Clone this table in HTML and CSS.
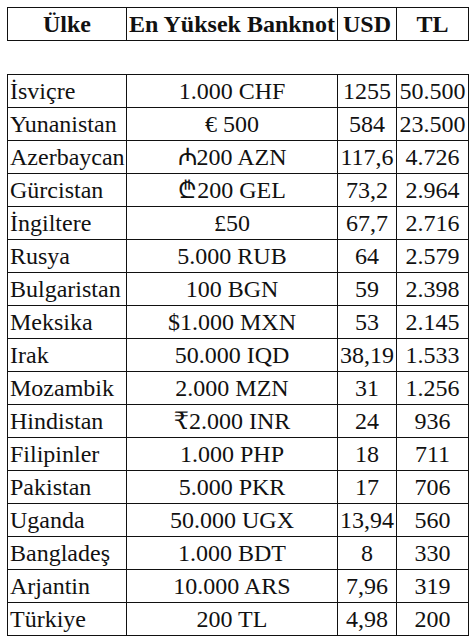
FILE: index.html
```html
<!DOCTYPE html>
<html lang="tr">
<head>
<meta charset="utf-8">
<title>Banknotlar</title>
<link rel="stylesheet" href="styles.css">
</head>
<body>
<div class="page">
<table class="grid head">
<colgroup><col class="c1"><col class="c2"><col class="c3"><col class="c4"></colgroup>
<tr><th class="ctr">Ülke</th><th class="ctr">En Yüksek Banknot</th><th class="ctr">USD</th><th class="ctr">TL</th></tr>
</table>
<table class="grid body">
<colgroup><col class="c1"><col class="c2"><col class="c3"><col class="c4"></colgroup>
<tr><td>İsviçre</td><td class="ctr">1.000 CHF</td><td class="ctr">1255</td><td class="ctr">50.500</td></tr>
<tr><td>Yunanistan</td><td class="ctr">€ 500</td><td class="ctr">584</td><td class="ctr">23.500</td></tr>
<tr><td>Azerbaycan</td><td class="ctr">₼200 AZN</td><td class="ctr">117,6</td><td class="ctr">4.726</td></tr>
<tr><td>Gürcistan</td><td class="ctr">₾200 GEL</td><td class="ctr">73,2</td><td class="ctr">2.964</td></tr>
<tr><td>İngiltere</td><td class="ctr">£50</td><td class="ctr">67,7</td><td class="ctr">2.716</td></tr>
<tr><td>Rusya</td><td class="ctr">5.000 RUB</td><td class="ctr">64</td><td class="ctr">2.579</td></tr>
<tr><td>Bulgaristan</td><td class="ctr">100 BGN</td><td class="ctr">59</td><td class="ctr">2.398</td></tr>
<tr><td>Meksika</td><td class="ctr">$1.000 MXN</td><td class="ctr">53</td><td class="ctr">2.145</td></tr>
<tr><td>Irak</td><td class="ctr">50.000 IQD</td><td class="ctr">38,19</td><td class="ctr">1.533</td></tr>
<tr><td>Mozambik</td><td class="ctr">2.000 MZN</td><td class="ctr">31</td><td class="ctr">1.256</td></tr>
<tr><td>Hindistan</td><td class="ctr">₹2.000 INR</td><td class="ctr">24</td><td class="ctr">936</td></tr>
<tr><td>Filipinler</td><td class="ctr">1.000 PHP</td><td class="ctr">18</td><td class="ctr">711</td></tr>
<tr><td>Pakistan</td><td class="ctr">5.000 PKR</td><td class="ctr">17</td><td class="ctr">706</td></tr>
<tr><td>Uganda</td><td class="ctr">50.000 UGX</td><td class="ctr">13,94</td><td class="ctr">560</td></tr>
<tr><td>Bangladeş</td><td class="ctr">1.000 BDT</td><td class="ctr">8</td><td class="ctr">330</td></tr>
<tr><td>Arjantin</td><td class="ctr">10.000 ARS</td><td class="ctr">7,96</td><td class="ctr">319</td></tr>
<tr><td>Türkiye</td><td class="ctr">200 TL</td><td class="ctr">4,98</td><td class="ctr">200</td></tr>
</table>
</div>
</body>
</html>
```
FILE: styles.css
```css
html, body {
  margin: 0;
  padding: 0;
  background: #ffffff;
}
.page {
  padding: 7px 0 0 7px;
  font-size: 24px;
  color: #111;
}
.grid {
  border-collapse: collapse;
  table-layout: fixed;
  width: 462px;
  border: 1px solid #111;
}
.grid th, .grid td {
  font-family: "Liberation Serif", "Times New Roman", Tinos, "DejaVu Serif", serif;
  font-size: 24px;
  border: 1px solid #111;
  padding: 2px 2px;
  line-height: 28px;
  height: 28px;
  white-space: nowrap;
  overflow: hidden;
  text-align: left;
}
.grid th {
  font-weight: bold;
}
.grid .ctr {
  text-align: center;
}
.c1 { width: 119px; }
.c2 { width: 211px; }
.c3 { width: 59px; }
.c4 { width: 72px; }
.body {
  margin-top: 33px;
}
```
